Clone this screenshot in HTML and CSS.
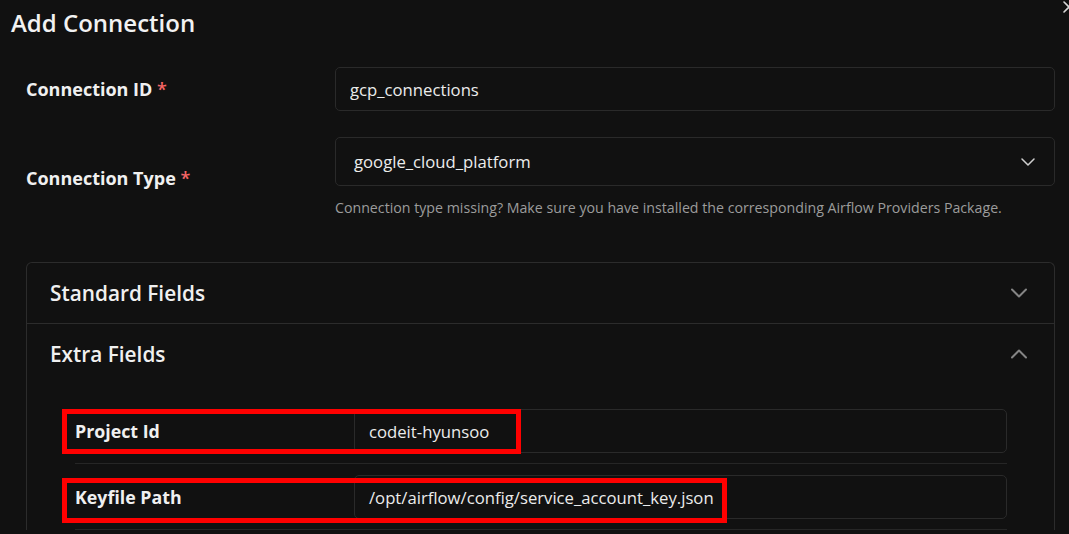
FILE: index.html
```html
<!DOCTYPE html>
<html lang="en">
<head>
    <meta charset="UTF-8">
    <meta name="viewport" content="width=device-width, initial-scale=1.0">
    <title>Add Connection</title>
    <link rel="stylesheet" href="styles.css">
</head>
<body>
    <div class="dialog">
        <button class="close-btn" aria-label="Close">
            <svg width="12" height="12" viewBox="0 0 12 12"><path d="M1 1 L11 11 M11 1 L1 11" stroke="#d8d8d8" stroke-width="1.6" fill="none" stroke-linecap="round"/></svg>
        </button>
        <h1 class="dialog-title">Add Connection</h1>

        <div class="form">
            <div class="field">
                <label class="field-label" for="conn-id">Connection ID <span class="req">*</span></label>
                <div class="field-control">
                    <input class="input" id="conn-id" type="text" value="gcp_connections">
                </div>
            </div>

            <div class="field">
                <label class="field-label">Connection Type <span class="req">*</span></label>
                <div class="field-control">
                    <div class="select">
                        <span>google_cloud_platform</span>
                        <svg width="14" height="8" viewBox="0 0 14 8"><path d="M1 1 L7 7 L13 1" stroke="#cfcfcf" stroke-width="1.5" fill="none" stroke-linecap="round" stroke-linejoin="round"/></svg>
                    </div>
                    <p class="help">Connection type missing? Make sure you have installed the corresponding Airflow Providers Package.</p>
                </div>
            </div>

            <div class="accordion">
                <div class="acc-item">
                    <div class="acc-header">
                        <span>Standard Fields</span>
                        <svg width="16" height="10" viewBox="0 0 16 10"><path d="M1 1.5 L8 8.5 L15 1.5" stroke="#858585" stroke-width="2" fill="none" stroke-linecap="round" stroke-linejoin="round"/></svg>
                    </div>
                </div>
                <div class="acc-item">
                    <div class="acc-header">
                        <span>Extra Fields</span>
                        <svg width="16" height="10" viewBox="0 0 16 10"><path d="M1 8.5 L8 1.5 L15 8.5" stroke="#858585" stroke-width="2" fill="none" stroke-linecap="round" stroke-linejoin="round"/></svg>
                    </div>
                    <div class="acc-body">
                        <div class="extra-row">
                            <div class="extra-label">Project Id</div>
                            <div class="input">codeit-hyunsoo</div>
                            <div class="mark mark-project"></div>
                        </div>
                        <div class="extra-row">
                            <div class="extra-label">Keyfile Path</div>
                            <div class="input">/opt/airflow/config/service_account_key.json</div>
                            <div class="mark mark-keyfile"></div>
                        </div>
                    </div>
                </div>
            </div>
        </div>
    </div>
</body>
</html>
```

FILE: styles.css
```css
html, body {
    margin: 0;
    height: 100%;
    overflow: hidden;
}
body {
    background-color: #111111;
    color: #ececec;
    font-family: "Open Sans", "Noto Sans", sans-serif;
}
.dialog {
    position: relative;
    padding: 8px 14px 0 11px;
}
.close-btn {
    position: absolute;
    top: 1px;
    right: -6px;
    background: none;
    border: none;
    padding: 0;
    width: 12px;
    height: 12px;
}
.close-btn svg { display: block; }
.dialog-title {
    margin: 0;
    font-size: 24px;
    line-height: 30px;
    font-weight: 600;
    color: #f2f2f2;
}

.form {
    display: flex;
    flex-direction: column;
    gap: 26px;
    padding: 29px 0 0 15px;
}
.field {
    display: grid;
    grid-template-columns: 309px 1fr;
    align-items: center;
}
.field-label {
    font-size: 18px;
    font-weight: 700;
    color: #f0f0f0;
}
.req { color: #f56565; font-weight: 600; }

.input {
    box-sizing: border-box;
    display: flex;
    align-items: center;
    width: 100%;
    height: 44px;
    padding: 0 14px;
    background-color: #111111;
    border: 1px solid #2a2a2a;
    border-radius: 5px;
    color: #ececec;
    font-family: inherit;
    font-size: 16.7px;
    outline: none;
}
.select {
    box-sizing: border-box;
    height: 49px;
    display: flex;
    align-items: center;
    justify-content: space-between;
    padding: 0 19px 0 18px;
    border: 1px solid #2a2a2a;
    border-radius: 5px;
    font-size: 16.7px;
    color: #ececec;
}
.help {
    margin: 12px 0 0;
    font-size: 14.2px;
    line-height: 20px;
    color: #9c9c9c;
}

.accordion {
    margin-top: 18px;
    border: 1px solid #2c2c2c;
    border-bottom: none;
    border-radius: 6px 6px 0 0;
}
.acc-item + .acc-item { border-top: 1px solid #2c2c2c; }
.acc-header {
    height: 60px;
    display: flex;
    align-items: center;
    justify-content: space-between;
    padding: 0 27px 0 23px;
    font-size: 20.8px;
    font-weight: 600;
    color: #f0f0f0;
}
.acc-header svg { display: block; }
.acc-body {
    padding: 14px 47px 0 48px;
}
.extra-row {
    position: relative;
    display: grid;
    grid-template-columns: 279px 1fr;
    align-items: center;
    padding: 11px 0 10px;
    border-bottom: 1px solid #262626;
}
.extra-label {
    font-size: 17.8px;
    font-weight: 700;
    color: #f0f0f0;
}

/* red annotation boxes drawn over the screenshot */
.mark {
    position: absolute;
    left: -13px;
    height: 45px;
    box-sizing: border-box;
    border: 5px solid #ff0000;
    pointer-events: none;
}
.mark-project { top: 11px; width: 459px; }
.mark-keyfile { top: 14px; width: 665px; }
```
